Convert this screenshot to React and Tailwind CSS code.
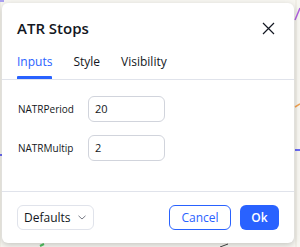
import React from 'react';

function ChartBackdrop() {
  return (
    <svg className="absolute inset-0" width="300" height="247" viewBox="0 0 300 247">
      <rect width="300" height="247" fill="#f7f6f1" />
      <line x1="0" y1="0" x2="0" y2="247" stroke="#e9e6dc" />
      <line x1="296" y1="0" x2="296" y2="247" stroke="#e9e6dc" />
      <line x1="0" y1="1" x2="4" y2="1" stroke="#a9a0f0" strokeWidth="2" />
      <line x1="295" y1="20" x2="300" y2="8" stroke="#b05fe0" strokeWidth="1.5" />
      <line x1="295" y1="150" x2="300" y2="150" stroke="#3b3bf0" strokeWidth="1.5" />
      <line x1="0" y1="155" x2="2" y2="155" stroke="#3b3bf0" strokeWidth="1.5" />
      <line x1="295" y1="107" x2="300" y2="104" stroke="#f0a050" strokeWidth="1.5" />
      <line x1="40" y1="246" x2="44" y2="244" stroke="#50c060" strokeWidth="2" />
      <line x1="220" y1="247" x2="228" y2="244" stroke="#444" strokeWidth="1" />
    </svg>
  );
}

export default function App() {
  return (
    <div
      className="relative w-[300px] h-[247px] overflow-hidden"
      style={{ fontFamily: '"Open Sans", "Noto Sans", sans-serif' }}
    >
      <ChartBackdrop />
      <div className="relative ml-[2px] mt-[3px] w-[292px] h-[240px] bg-white rounded-md shadow-[0_2px_6px_rgba(0,0,0,0.2)] flex flex-col text-[#131722]">
        <div className="flex items-center justify-between pl-[15px] pr-[19px] h-[44px] pt-[6px]">
          <div className="text-[15px] font-semibold leading-none">ATR Stops</div>
          <svg width="13" height="13" viewBox="0 0 13 13">
            <path d="M1 1 L12 12 M12 1 L1 12" stroke="#131722" strokeWidth="1.2" fill="none" />
          </svg>
        </div>
        <div className="flex px-[15px] gap-[21px] border-b border-[#e0e3eb] h-[33px] items-end text-[12px]">
          <div className="relative text-[#2962ff] pb-[11px] leading-none">
            Inputs
            <div className="absolute left-0 right-0 bottom-0 h-[3px] bg-[#2962ff] rounded-t-[1px]" />
          </div>
          <div className="pb-[11px] leading-none">Style</div>
          <div className="pb-[11px] leading-none">Visibility</div>
        </div>
        <div className="flex-1 flex flex-col gap-[13px] pt-[16px] pl-[16px] text-[10px]">
          <div className="flex items-center">
            <div className="w-[70px]">NATRPeriod</div>
            <div className="w-[77px] h-[26px] border border-[#d1d4dc] rounded-md flex items-center px-[6px] text-[11px]">20</div>
          </div>
          <div className="flex items-center">
            <div className="w-[70px]">NATRMultip</div>
            <div className="w-[77px] h-[26px] border border-[#d1d4dc] rounded-md flex items-center px-[6px] text-[11px]">2</div>
          </div>
        </div>
        <div className="border-t border-[#e0e3eb] h-[52px] flex items-center justify-between px-[15px]">
          <div className="w-[77px] h-[25px] border border-[#e0e3eb] rounded-md flex items-center justify-between pl-[6px] pr-[7px] text-[12px]">
            <span>Defaults</span>
            <svg width="8" height="5" viewBox="0 0 8 5">
              <path d="M0.5 0.8 L4 4 L7.5 0.8" stroke="#787b86" strokeWidth="1" fill="none" />
            </svg>
          </div>
          <div className="flex gap-[9px]">
            <div className="w-[62px] h-[25px] border border-[#2962ff] rounded-md text-[#2962ff] flex items-center justify-center text-[12px]">
              Cancel
            </div>
            <div className="w-[39px] h-[25px] bg-[#2962ff] rounded-md text-white flex items-center justify-center text-[12px] font-semibold">
              Ok
            </div>
          </div>
        </div>
      </div>
    </div>
  );
}
